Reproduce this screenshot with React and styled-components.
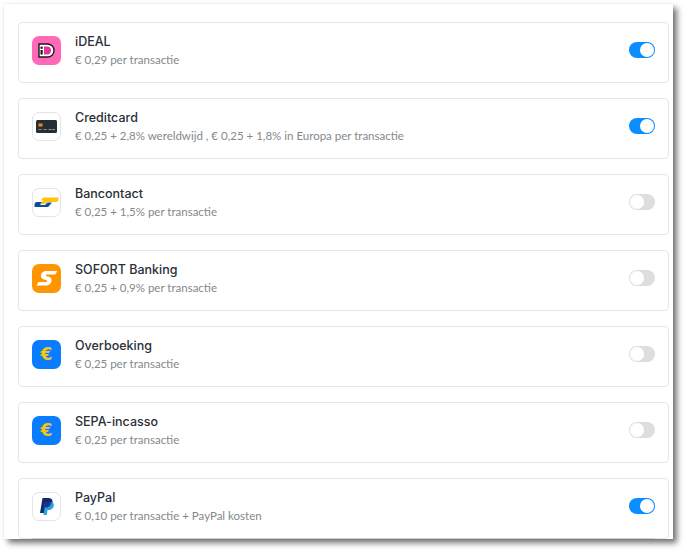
import React from 'react';
import styled, { createGlobalStyle } from 'styled-components';

const GlobalStyle = createGlobalStyle`
  html, body {
    margin: 0;
    padding: 0;
    background: #fff;
  }
  body {
    width: 686px;
    height: 552px;
    overflow: hidden;
    font-family: Lato, "Open Sans", sans-serif;
  }
`;

const Page = styled.div`
  padding: 4px 0 0 4px;
`;

const Panel = styled.div`
  width: 669px;
  height: 535px;
  box-sizing: border-box;
  padding: 18px 4px 0 14px;
  background: #fff;
  overflow: hidden;
  box-shadow: 0 0 2px rgba(0, 0, 0, 0.08), 4px 4px 6px rgba(0, 0, 0, 0.55);
  display: flex;
  flex-direction: column;
  gap: 15px;
`;

const Card = styled.div`
  position: relative;
  flex: none;
  height: 61px;
  box-sizing: border-box;
  border: 1px solid #e6e6e6;
  border-radius: 4px;
  padding: 0 13px 5px 13px;
  display: flex;
  align-items: center;
  background: #fff;

  ${({ $divider }) =>
    $divider &&
    `&::after {
      content: '';
      position: absolute;
      left: 13px;
      right: 13px;
      bottom: -1px;
      height: 1px;
      background: #cfcfcf;
    }`}
`;

const Logo = styled.div`
  flex: none;
  width: 29px;
  height: 29px;
  box-sizing: border-box;
  border-radius: 7px;
  display: flex;
  align-items: center;
  justify-content: center;
  background: ${({ $bg }) => $bg || '#fff'};
  border: ${({ $bg }) => ($bg ? 'none' : '1px solid #e4e4e4')};
`;

const Euro = styled.span`
  font-family: "DejaVu Sans", sans-serif;
  font-weight: 700;
  font-size: 17px;
  line-height: 1;
  color: #f5c518;
`;

const Info = styled.div`
  flex: 1;
  margin: 1px 0 0 14px;
  display: flex;
  flex-direction: column;
  gap: 2px;
`;

const Name = styled.div`
  font-family: Inter, Lato, sans-serif;
  font-size: 12.5px;
  line-height: 16px;
  font-weight: 500;
  color: #2a3038;
`;

const Price = styled.div`
  font-size: 11.5px;
  line-height: 15px;
  color: #85888c;
`;

const Toggle = styled.div`
  flex: none;
  width: 26px;
  height: 16px;
  box-sizing: border-box;
  border-radius: 8px;
  padding: 1px;
  display: flex;
  justify-content: ${({ $on }) => ($on ? 'flex-end' : 'flex-start')};
  background: ${({ $on }) => ($on ? '#0a8dff' : '#dedede')};
`;

const Knob = styled.div`
  width: 14px;
  height: 14px;
  border-radius: 50%;
  background: #fff;
`;

const IdealIcon = () => (
  <svg width="17" height="15" viewBox="0 0 17 15">
    <path d="M1 1h8.5c3.6 0 6.5 2.6 6.5 6.5S13.100 14 9.500 14H1z" fill="#fff" stroke="#1a1a1a" strokeWidth="1.4" />
    <path d="M6 3.500h3.200c2.200 0 3.800 1.600 3.800 4s-1.600 4-3.800 4H6z" fill="#e5339b" />
    <rect x="2.500" y="7" width="2.200" height="4.500" fill="#1a1a1a" />
    <circle cx="3.600" cy="4.700" r="1.200" fill="#1a1a1a" />
  </svg>
);

const CardIcon = () => (
  <svg width="21" height="13" viewBox="0 0 21 13">
    <rect width="21" height="13" rx="1.500" fill="#262d35" />
    <rect x="2.500" y="3.500" width="4" height="3" fill="#f08a1d" />
    <path d="M2.500 9.500h3M7.500 9.500h3M12.500 9.500h3M16 9.500h3" stroke="#8a9098" strokeWidth="1" />
  </svg>
);

const BancontactIcon = () => (
  <svg width="25" height="10" viewBox="0 0 25 10">
    <path d="M0.500 10V7.500C0.500 6 1.500 5 3 5H9L6 8H11L13.500 5.500H18L15 9C14.500 9.700 14 10 13 10Z" fill="#0b4da2" />
    <path d="M9 0.500H24.500V2.500C24.500 4 23.500 5 22 5H13L11 7H6L9.500 3.500L7 3.500Z" fill="#fcc40f" />
  </svg>
);

const SofortIcon = () => (
  <svg width="22" height="15" viewBox="0 0 22 15">
    <path d="M21.500 0L19 3.500H11C9.500 3.500 9.500 5 11 5.300L13 5.800C17.500 7 16 14.500 10 14.500H0.500L2.500 11H10C11.500 11 11.500 9.300 10 9L8 8.500C3 7.200 4.500 0 10 0Z" fill="#fff" />
  </svg>
);

const PayPalIcon = () => (
  <svg width="14" height="17" viewBox="0 0 14 17">
    <path d="M2.500 0H8.500C11.500 0 13 1.800 12.500 4.500 12 8 9.500 9.500 6.500 9.500H5L4 15H0z" fill="#14296f" />
    <path d="M5 4H10C13 4 14.400 5.500 13.800 8 13.200 10.800 11 12 8.500 12H7.500L6.800 17H3.500z" fill="#149bdf" opacity="0.9" />
    <path d="M5 4H10.500C11.500 6.500 9.500 9.500 6.500 9.500H5L4.200 13z" fill="#1f2f8f" />
  </svg>
);

const methods = [
  { name: 'iDEAL', price: '€ 0,29 per transactie', bg: '#ff69b8', icon: <IdealIcon />, on: true },
  { name: 'Creditcard', price: '€ 0,25 + 2,8% wereldwijd , € 0,25 + 1,8% in Europa per transactie', icon: <CardIcon />, on: true },
  { name: 'Bancontact', price: '€ 0,25 + 1,5% per transactie', icon: <BancontactIcon />, on: false },
  { name: 'SOFORT Banking', price: '€ 0,25 + 0,9% per transactie', bg: '#ff9500', icon: <SofortIcon />, on: false },
  { name: 'Overboeking', price: '€ 0,25 per transactie', bg: '#0a7cff', icon: <Euro>€</Euro>, on: false },
  { name: 'SEPA-incasso', price: '€ 0,25 per transactie', bg: '#0a7cff', icon: <Euro>€</Euro>, on: false },
  { name: 'PayPal', price: '€ 0,10 per transactie + PayPal kosten', icon: <PayPalIcon />, on: true, divider: true },
];

export default function App() {
  return (
    <Page>
      <GlobalStyle />
      <Panel>
        {methods.map((m) => (
          <Card key={m.name} $divider={m.divider}>
            <Logo $bg={m.bg}>{m.icon}</Logo>
            <Info>
              <Name>{m.name}</Name>
              <Price>{m.price}</Price>
            </Info>
            <Toggle $on={m.on}>
              <Knob />
            </Toggle>
          </Card>
        ))}
      </Panel>
    </Page>
  );
}
